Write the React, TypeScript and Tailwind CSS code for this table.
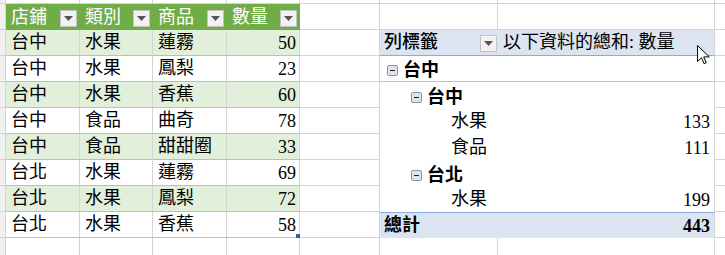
const rows = [
  ['台中', '水果', '蓮霧', '50'],
  ['台中', '水果', '鳳梨', '23'],
  ['台中', '水果', '香蕉', '60'],
  ['台中', '食品', '曲奇', '78'],
  ['台中', '食品', '甜甜圈', '33'],
  ['台北', '水果', '蓮霧', '69'],
  ['台北', '水果', '鳳梨', '72'],
  ['台北', '水果', '香蕉', '58'],
]

const pivot = [
  { label: '台中', level: 0, value: '' },
  { label: '台中', level: 1, value: '' },
  { label: '水果', level: 2, value: '133' },
  { label: '食品', level: 2, value: '111' },
  { label: '台北', level: 1, value: '' },
  { label: '水果', level: 2, value: '199' },
]

function Drop() {
  return (
    <span className="flex h-[17px] w-[17px] items-center justify-center border border-[#c3c3c3] bg-[#f2f2f2]">
      <svg width="9" height="5" viewBox="0 0 9 5">
        <path d="M0 0h9L4.5 5z" fill="#555" />
      </svg>
    </span>
  )
}

function Minus() {
  return (
    <span className="mr-[5px] mb-[3px] flex h-[11px] w-[11px] items-center justify-center rounded-[2px] border border-[#8a96a8] bg-[#dfe4ec]">
      <span className="h-[1px] w-[5px] bg-[#222]" />
    </span>
  )
}

function Gutter({ h = 'h-[26px]' }: { h?: string }) {
  return <div className={`${h} w-[6px] shrink-0 border-r border-b border-[#d4d4d4] bg-[#f0f0f0]`} />
}

export default function App() {
  return (
    <div className="relative h-[255px] w-[725px] overflow-hidden bg-white text-[18px] leading-none text-black [font-family:'Liberation_Serif','Noto_Sans_CJK_TC',serif]">
      {/* top sliver of the previous row */}
      <div className="flex h-[4px]">
        <Gutter h="h-[4px]" />
        <div className="w-[74px] border-r border-b border-[#d4d4d4]" />
        <div className="w-[73px] border-r border-b border-[#d4d4d4]" />
        <div className="w-[74px] border-r border-b border-[#d4d4d4]" />
        <div className="w-[73px] border-r border-b border-[#d4d4d4]" />
        <div className="w-[80px] border-r border-b border-[#d4d4d4]" />
        <div className="w-[118px] border-r border-b border-[#d4d4d4]" />
        <div className="w-[217px] border-r border-b border-[#d4d4d4]" />
        <div className="flex-1 border-b border-[#d4d4d4]" />
      </div>

      {/* table header + pivot blank row */}
      <div className="flex h-[26px]">
        <Gutter />
        {['店鋪', '類別', '商品', '數量'].map((h, i) => (
          <div
            key={h}
            className={`flex items-end justify-between bg-[#70ad47] pb-[3px] pl-[5px] pr-[3px] text-white ${i % 2 ? 'w-[73px]' : 'w-[74px]'}`}
          >
            <span className="pb-[1px]">{h}</span>
            <Drop />
          </div>
        ))}
        <div className="w-[80px] border-r border-b border-[#d4d4d4]" />
        <div className="w-[118px] border-r border-b border-[#d4d4d4]" />
        <div className="w-[217px] border-r border-b border-[#d4d4d4]" />
        <div className="flex-1 border-b border-[#d4d4d4]" />
      </div>

      {rows.map((r, ri) => {
        const band = ri % 2 === 0 ? 'bg-[#e2efda]' : 'bg-white'
        const isHead = ri === 0
        const isTotal = ri === 7
        const p = ri >= 1 && ri <= 6 ? pivot[ri - 1] : null
        return (
          <div key={ri} className="flex h-[26px]">
            <Gutter />
            <div className={`flex w-[74px] items-end border-r border-b border-r-[#d4d4d4] border-b-[#a9d08e] pb-[4px] pl-[5px] ${band}`}>{r[0]}</div>
            <div className={`flex w-[73px] items-end border-r border-b border-r-[#d4d4d4] border-b-[#a9d08e] pb-[4px] pl-[5px] ${band}`}>{r[1]}</div>
            <div className={`flex w-[74px] items-end border-r border-b border-r-[#d4d4d4] border-b-[#a9d08e] pb-[4px] pl-[5px] ${band}`}>{r[2]}</div>
            <div className={`relative flex w-[73px] items-end justify-end border-r border-b border-r-[#d4d4d4] border-b-[#a9d08e] pb-[3px] pr-[3px] ${band}`}>
              {r[3]}
              {ri === 7 && <span className="absolute right-[-1px] bottom-[-1px] h-[4px] w-[4px] bg-[#3b57a8]" />}
            </div>
            <div className="w-[80px] border-r border-b border-[#d4d4d4]" />

            {isHead && (
              <div className="flex w-[335px] border-r border-b border-r-[#d4d4d4] border-b-[#8ea9db] bg-[#dce4f2]">
                <div className="flex w-[118px] items-end justify-between pb-[3px] pl-[4px] pr-[1px] font-medium">
                  <span className="pb-[1px]">列標籤</span>
                  <Drop />
                </div>
                <div className="flex flex-1 items-end pb-[4px] pl-[5px]">以下資料的總和: 數量</div>
              </div>
            )}

            {p && (
              <div
                className={`flex w-[335px] items-end border-r border-r-[#d4d4d4] pr-[4px] ${ri === 1 ? 'border-b border-b-[#b4c6e7]' : ''} ${p.level === 0 ? 'pl-[7px]' : p.level === 1 ? 'pl-[31px]' : 'pl-[71px]'}`}
              >
                <div className={`flex flex-1 items-end ${p.level < 2 ? 'pb-[2px] font-bold' : 'pb-[4px]'}`}>
                  {p.level < 2 && <Minus />}
                  <span>{p.label}</span>
                </div>
                {p.value && <span className="pb-[3px]">{p.value}</span>}
              </div>
            )}

            {isTotal && (
              <div className="flex w-[335px] items-end justify-between border-t border-r border-t-[#8ea9db] border-r-[#d4d4d4] bg-[#dce4f2] pb-[3px] pl-[4px] pr-[4px] font-bold">
                <span className="pb-[1px]">總計</span>
                <span>443</span>
              </div>
            )}

            <div className="flex-1 border-b border-[#d4d4d4]" />
          </div>
        )
      })}

      {/* blank row below */}
      <div className="flex h-[26px]">
        <Gutter />
        <div className="w-[74px] border-r border-b border-[#d4d4d4]" />
        <div className="w-[73px] border-r border-b border-[#d4d4d4]" />
        <div className="w-[74px] border-r border-b border-[#d4d4d4]" />
        <div className="w-[73px] border-r border-b border-[#d4d4d4]" />
        <div className="w-[80px] border-r border-b border-[#d4d4d4]" />
        <div className="w-[118px] border-r border-b border-[#d4d4d4]" />
        <div className="w-[217px] border-r border-b border-[#d4d4d4]" />
        <div className="flex-1 border-b border-[#d4d4d4]" />
      </div>

      {/* mouse cursor */}
      <svg className="absolute left-[697px] top-[45px]" width="13" height="20" viewBox="0 0 13 20">
        <path d="M0.5 0.5v16l4-3.8 2.6 6 2.2-1-2.6-5.8h5.6z" fill="#fff" stroke="#000" strokeWidth="1" strokeLinejoin="round" />
      </svg>
    </div>
  )
}
